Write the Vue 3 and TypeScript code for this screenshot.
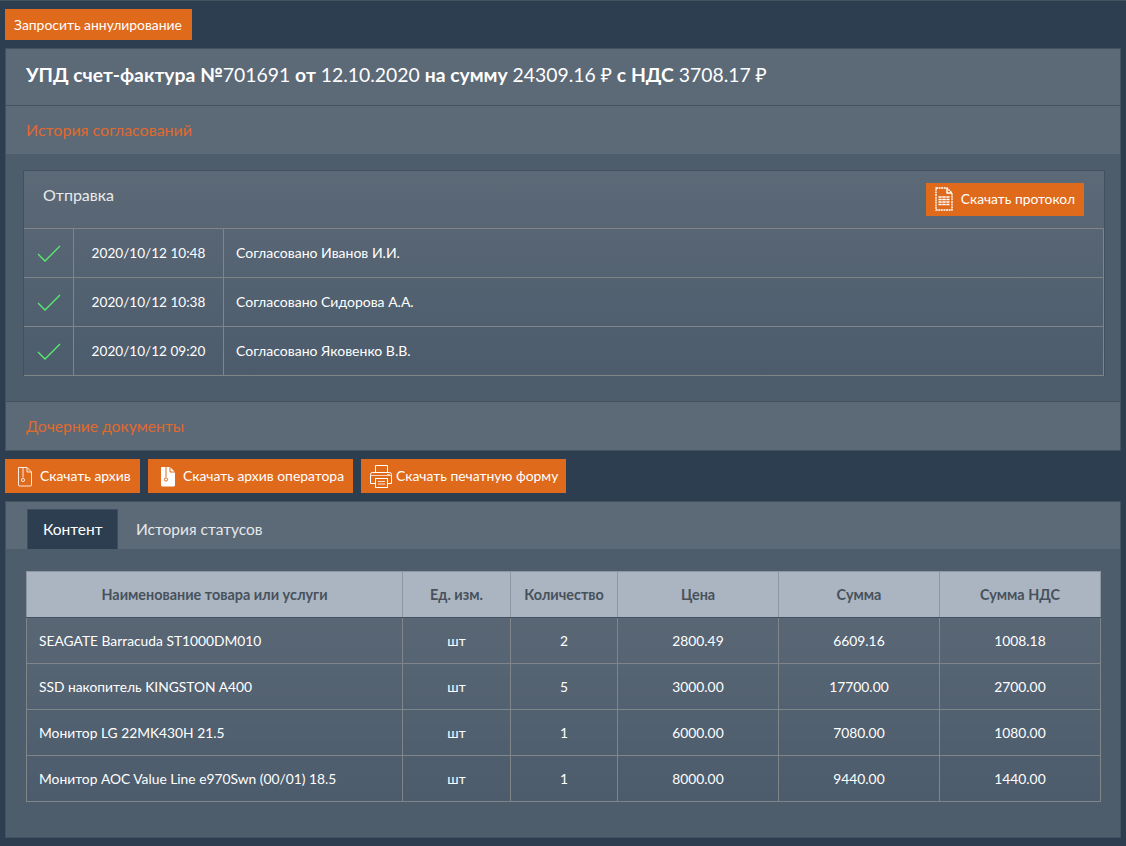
<script setup lang="ts">
// document card: approval history, download actions and the content table
interface Approval {
  date: string
  text: string
}

interface Item {
  name: string
  unit: string
  qty: number
  price: string
  sum: string
  vat: string
}

const approvals: Approval[] = [
  { date: '2020/10/12 10:48', text: 'Согласовано Иванов И.И.' },
  { date: '2020/10/12 10:38', text: 'Согласовано Сидорова А.А.' },
  { date: '2020/10/12 09:20', text: 'Согласовано Яковенко В.В.' },
]

const items: Item[] = [
  { name: 'SEAGATE Barracuda ST1000DM010', unit: 'шт', qty: 2, price: '2800.49', sum: '6609.16', vat: '1008.18' },
  { name: 'SSD накопитель KINGSTON A400', unit: 'шт', qty: 5, price: '3000.00', sum: '17700.00', vat: '2700.00' },
  { name: 'Монитор LG 22MK430H 21.5', unit: 'шт', qty: 1, price: '6000.00', sum: '7080.00', vat: '1080.00' },
  { name: 'Монитор AOC Value Line e970Swn (00/01) 18.5', unit: 'шт', qty: 1, price: '8000.00', sum: '9440.00', vat: '1440.00' },
]
</script>

<template>
  <main class="page">
    <div class="top"><button class="btn plain">Запросить аннулирование</button></div>

    <section class="panel">
      <h1 class="title">
        <b>УПД счет-фактура №</b>701691 <b>от</b> 12.10.2020 <b>на сумму</b> 24309.16 ₽ <b>с НДС</b> 3708.17 ₽
      </h1>
      <div class="acc-head first">История согласований</div>
      <div class="acc-body">
        <div class="inner">
          <div class="inner-head">
            <span>Отправка</span>
            <button class="btn proto">
              <svg width="18" height="24" viewBox="0 0 18 24" fill="none" stroke="#fff" stroke-width="1.4">
                <path d="M1 1h11l5 5v17H1z" stroke-dasharray="2 .6" />
                <path d="M12 1v5h5" />
                <path d="M3.500 10h11M3.500 12.500h11M3.500 15h11M3.500 17.500h11" stroke-width="1.600" />
                <path d="M7 9v10M11 9v10" stroke="#e06a1b" stroke-width=".6" />
              </svg>
              Скачать протокол
            </button>
          </div>
          <div v-for="row in approvals" :key="row.date" class="appr">
            <div class="appr-icon">
              <svg width="24" height="18" viewBox="0 0 24 18" fill="none" stroke="#58ee6e" stroke-width="1.300">
                <path d="M1 9l7 7L23 1" />
              </svg>
            </div>
            <div class="appr-date">{{ row.date }}</div>
            <div class="appr-text">{{ row.text }}</div>
          </div>
        </div>
      </div>
      <div class="acc-head second">Дочерние документы</div>
    </section>

    <div class="actions">
      <button class="btn act arch">
        <svg width="16" height="21" viewBox="0 0 16 21" fill="none" stroke="#fff" stroke-width="1" stroke-opacity=".85">
          <path d="M1.500 1.500h8.500l4.500 4.500v13a1 1 0 0 1-1 1h-11a1 1 0 0 1-1-1z" />
          <path d="M10 1.500V6h4.500M6 1.500v10" />
          <circle cx="6" cy="14" r="1.600" />
        </svg>
        Скачать архив
      </button>
      <button class="btn act oper">
        <svg width="16" height="21" viewBox="0 0 16 21">
          <path fill="#fff" d="M2 1h8l5 5v13a1.500 1.500 0 0 1-1.500 1.500h-11A1.500 1.500 0 0 1 1 19V2a1 1 0 0 1 1-1z" />
          <path fill="none" stroke="#e06a1b" stroke-width="1" d="M10 1v5h5M6 1v10" />
          <circle cx="6" cy="13.500" r="1.600" fill="none" stroke="#e06a1b" />
        </svg>
        Скачать архив оператора
      </button>
      <button class="btn act print">
        <svg width="23" height="23" viewBox="0 0 23 23" fill="none" stroke="#fff" stroke-width="1">
          <path d="M5.500 8V.5h12V8" />
          <path d="M5.500 18.500H.5V9.500a2 2 0 0 1 2-2h17a2 2 0 0 1 2 2v9h-4" />
          <path d="M.5 10.500h21M17 9.500h3" stroke-opacity=".7" />
          <rect x="5.500" y="13.500" width="12" height="9" fill="#e06a1b" />
          <path d="M8 16.500h7M8 19h7" stroke-width="1.200" stroke-opacity=".8" />
        </svg>
        Скачать печатную форму
      </button>
    </div>

    <section class="panel content">
      <div class="tabs">
        <span class="tab active">Контент</span>
        <span class="tab">История статусов</span>
      </div>
      <div class="tab-body">
        <table class="grid">
          <colgroup>
            <col style="width: 376px" />
            <col style="width: 108px" />
            <col style="width: 107px" />
            <col style="width: 161px" />
            <col style="width: 161px" />
            <col style="width: 161px" />
          </colgroup>
          <thead>
            <tr>
              <th>Наименование товара или услуги</th>
              <th>Ед. изм.</th>
              <th>Количество</th>
              <th>Цена</th>
              <th>Сумма</th>
              <th>Сумма НДС</th>
            </tr>
          </thead>
          <tbody>
            <tr v-for="item in items" :key="item.name">
              <td class="name">{{ item.name }}</td>
              <td>{{ item.unit }}</td>
              <td>{{ item.qty }}</td>
              <td>{{ item.price }}</td>
              <td>{{ item.sum }}</td>
              <td>{{ item.vat }}</td>
            </tr>
          </tbody>
        </table>
      </div>
    </section>
  </main>
</template>

<style>
html,
body {
  background: #2c3e50;
}
</style>

<style scoped>
.page {
  width: 1126px;
  height: 846px;
  box-sizing: border-box;
  padding: 9px 5px 0;
  font: 14px Lato, "Noto Sans", sans-serif;
  color: #fff;
  background: #2c3e50;
  border-top: 1px solid #44525f;
  overflow: hidden;
}
.top {
  margin-top: -1px;
  height: 31px;
  margin-bottom: 8px;
}
.btn {
  display: inline-flex;
  align-items: center;
  border: 0;
  padding: 0;
  margin: 0;
  font: 13.900px Lato, "Noto Sans", sans-serif;
  color: #fff;
  background: #e06a1b;
}
.plain {
  height: 31px;
  width: 187px;
  padding: 0 9px 1px;
}
.panel {
  border: 1px solid #44525f;
  background: #5c6977;
}
.title {
  margin: 0;
  height: 57px;
  box-sizing: border-box;
  padding: 0 20px;
  white-space: pre;
  line-height: 51px;
  font-size: 19.350px;
  font-weight: 400;
  border-bottom: 1px solid #44525f;
}
.title b {
  font-weight: 700;
}
.acc-head {
  height: 48px;
  box-sizing: border-box;
  padding-left: 20px;
  line-height: 48px;
  font-size: 16px;
  color: #e06a2e;
}
.acc-head.first {
  height: 49px;
  border-bottom: 1px solid #4f5d6b;
}
.acc-head.second {
  font-size: 15.700px;
}
.acc-body {
  height: 247px;
  box-sizing: border-box;
  padding: 15px 17px 0;
  background: #4e5d6c;
  border-bottom: 1px solid #44525f;
}
.inner {
  width: 1082px;
  box-sizing: border-box;
  border: 1px solid #44525f;
  border-bottom: 0;
  background: linear-gradient(#5c6977, #4c5c6c);
}
.inner-head {
  height: 57px;
  box-sizing: border-box;
  padding: 0 20px 0 19px;
  display: flex;
  justify-content: space-between;
  font-size: 16px;
  line-height: 48px;
  color: #e8eaec;
}
.proto {
  height: 33px;
  margin-top: 12px;
  padding: 0 9px 1px;
  gap: 8px;
  line-height: 1;
  font-size: 13.800px;
}
.appr {
  height: 49px;
  box-sizing: border-box;
  display: flex;
  align-items: stretch;
  border-top: 1px solid #7f8589;
  line-height: 48px;
}
.appr:last-child {
  border-bottom: 1px solid #7f8589;
  height: 50px;
}
.appr-icon {
  width: 49px;
  padding-top: 2px;
  box-sizing: content-box;
  height: 46px;
  display: flex;
  align-items: center;
  justify-content: center;
  border-right: 1px solid #7f8589;
}
.appr-date {
  width: 150px;
  box-sizing: border-box;
  text-align: center;
  font-size: 13.600px;
  border-right: 1px solid #7f8589;
}
.appr-text {
  flex: 1;
  padding-left: 12px;
  font-size: 14px;
  border-right: 1px solid #7f8589;
}
.actions {
  display: flex;
  gap: 8px;
  margin: 8px 0;
}
.act {
  height: 34px;
  padding: 0 0 2px;
  gap: 7px;
  justify-content: flex-start;
}
.act svg {
  margin-top: 2px;
}
.arch {
  width: 135px;
  padding-left: 12px;
}
.oper {
  width: 205px;
  padding-left: 12px;
}
.print {
  width: 205px;
  padding-left: 9px;
  gap: 3px;
}
.content {
  height: 337px;
  box-sizing: border-box;
  background: #4e5d6c;
}
.tabs {
  height: 47px;
  box-sizing: border-box;
  padding: 7px 0 0 21px;
  display: flex;
  background: #5c6977;
  font-size: 15.500px;
}
.tab {
  height: 40px;
  line-height: 40px;
  padding: 0 18px;
  color: #e6e8ea;
}
.tab.active {
  width: 91px;
  background: #2c3e50;
  border: 1px solid #3c4e60;
  border-bottom: 0;
  box-sizing: border-box;
  padding: 0 15px;
  line-height: 39px;
  color: #fff;
}
.tab-body {
  padding: 22px 20px 0;
}
.grid {
  width: 1075px;
  table-layout: fixed;
  border-collapse: collapse;
  font-size: 13.800px;
  background: linear-gradient(#5c6977, #4c5c6c);
}
.grid th {
  height: 45px;
  padding: 0;
  font-size: 14.400px;
  font-weight: 700;
  color: #47515c;
  background: #aab5c1;
  border: 1px solid #8d97a2;
  border-bottom-color: #44525f;
}
.grid td {
  height: 45px;
  padding: 0;
  text-align: center;
  border: 1px solid #7f8589;
}
.grid td.name {
  text-align: left;
  padding-left: 12px;
}
</style>
